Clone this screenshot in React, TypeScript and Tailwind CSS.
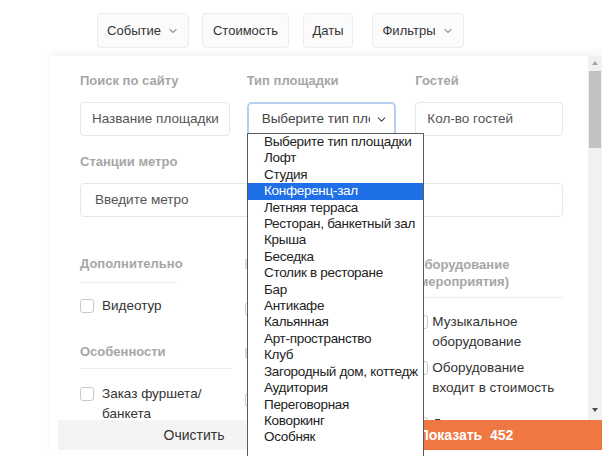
import { ChevronDown } from "lucide-react";

const venueTypes = [
  "Выберите тип площадки",
  "Лофт",
  "Студия",
  "Конференц-зал",
  "Летняя терраса",
  "Ресторан, банкетный зал",
  "Крыша",
  "Беседка",
  "Столик в ресторане",
  "Бар",
  "Антикафе",
  "Кальянная",
  "Арт-пространство",
  "Клуб",
  "Загородный дом, коттедж",
  "Аудитория",
  "Переговорная",
  "Коворкинг",
  "Особняк",
];

function Box() {
  return <span className="mt-[3px] h-[14px] w-[14px] shrink-0 rounded-[3px] border border-[#c8c8c8] bg-white" />;
}

function Check({ label, gap = "gap-[8px]" }: { label: React.ReactNode; gap?: string }) {
  return (
    <div className={`flex items-start ${gap}`}>
      <Box />
      <span className="text-[13.5px] leading-[20px] text-[#333]">{label}</span>
    </div>
  );
}

export default function App() {
  return (
    <div
      className="relative h-[456px] w-[602px] overflow-hidden bg-white"
      style={{ fontFamily: '"Liberation Sans", Arial, sans-serif' }}
    >
      {/* top filter buttons */}
      <div className="flex h-[56px] items-start pt-[13px] pl-[97px]">
        <button className="flex h-[35px] w-[92px] items-center justify-center gap-[6px] rounded-[4px] border border-[#ececec] bg-[#fbfbfb] text-[13px] text-[#333]">
          Событие <ChevronDown size={12} strokeWidth={1.8} />
        </button>
        <button className="ml-[13px] flex h-[35px] w-[87px] items-center justify-center rounded-[4px] border border-[#ececec] bg-[#fbfbfb] text-[13px] text-[#333]">
          Стоимость
        </button>
        <button className="ml-[14px] flex h-[35px] w-[50px] items-center justify-center rounded-[4px] border border-[#ececec] bg-[#fbfbfb] text-[13px] text-[#333]">
          Даты
        </button>
        <button className="ml-[19px] flex h-[35px] w-[92px] items-center justify-center gap-[6px] rounded-[4px] border border-[#ececec] bg-[#fbfbfb] text-[13px] text-[#333]">
          Фильтры <ChevronDown size={12} strokeWidth={1.8} />
        </button>
      </div>

      {/* filter panel */}
      <div className="ml-[50px] flex h-[400px] flex-col bg-white shadow-[0_-4px_6px_rgba(0,0,0,0.04)]">
        <div className="flex h-[364px] overflow-hidden">
          <div className="flex-1 pl-[30px] pt-[17px]">
            <div className="grid w-[483px] grid-cols-3 gap-x-[17px]">
              <div className="text-[13px] font-bold leading-[16px] text-[#a6a6a6]">Поиск по сайту</div>
              <div className="text-[13px] font-bold leading-[16px] text-[#a6a6a6]">Тип площадки</div>
              <div className="pl-[2px] text-[13px] font-bold leading-[16px] text-[#a6a6a6]">Гостей</div>
              <div className="mt-[13px] flex h-[34px] items-center whitespace-nowrap rounded-[4px] border border-[#e6e6e6] px-[11px] text-[13.5px] text-[#555]">
                Название площадки
              </div>
              <div className="mt-[13px] flex h-[34px] items-center justify-between rounded-[5px] border-2 border-[#b5d0ee] pl-[13px] pr-[6px] text-[13.5px] text-[#444]">
                <span className="w-[108px] overflow-hidden whitespace-nowrap">Выберите тип площадки</span>
                <ChevronDown size={13} strokeWidth={2} className="text-[#444]" />
              </div>
              <div className="ml-[2px] mt-[13px] flex h-[34px] items-center rounded-[4px] border border-[#e6e6e6] px-[11px] text-[13.5px] text-[#555]">
                Кол-во гостей
              </div>
            </div>
            <div className="mt-[18px] text-[13px] font-bold leading-[16px] text-[#a6a6a6]">Станции метро</div>
            <div className="mt-[13px] flex h-[34px] w-[483px] items-center rounded-[4px] border border-[#e6e6e6] px-[14px] text-[13.5px] text-[#555]">
              Введите метро
            </div>

            <div className="mt-[39px] grid w-[483px] grid-cols-3 gap-x-[17px]">
              <div>
                <div className="text-[13px] font-bold leading-[16px] text-[#a6a6a6]">Дополнительно</div>
                <div className="mt-[10px] h-px w-[98px] bg-[#eeeeee]" />
                <div className="mt-[13px]">
                  <Check label="Видеотур" />
                </div>
                <div className="mt-[28px] text-[13px] font-bold leading-[16px] text-[#a6a6a6]">Особенности</div>
                <div className="mt-[8px] h-px w-[152px] bg-[#eeeeee]" />
                <div className="mt-[15px]">
                  <Check
                    label={
                      <>
                        Заказ фуршета/
                        <br />
                        банкета
                      </>
                    }
                  />
                </div>
              </div>
              <div className="-ml-[2px]">
                <div className="mt-[3px] h-[10px] w-[4px] bg-[#d8d8d8]" />
                <div className="mt-[30px] flex"><Box /></div>
                <div className="mt-[32px] h-[10px] w-[4px] bg-[#d8d8d8]" />
                <div className="mt-[32px] flex"><Box /></div>
              </div>
              <div className="ml-[1px]">
                <div className="text-[13px] font-bold leading-[17px] text-[#a6a6a6]">
                  Оборудование
                  <br />
                  (мероприятия)
                </div>
                <div className="mt-[7px] h-px w-[150px] bg-[#eeeeee]" />
                <div className="mt-[14px]">
                  <Check gap="gap-[4px]" label={<>Музыкальное<br />оборудование</>} />
                </div>
                <div className="mt-[6px]">
                  <Check gap="gap-[4px]" label={<>Оборудование<br />входит в стоимость</>} />
                </div>
                <div className="mt-[16px]">
                  <Check gap="gap-[4px]" label="Дым машина" />
                </div>
              </div>
            </div>
          </div>

          {/* scrollbar */}
          <div className="flex w-[14px] flex-col items-center bg-[#f1f1f1]">
            <div className="mt-[5px] h-0 w-0 border-x-[3.5px] border-b-[4px] border-x-transparent border-b-[#a3a3a3]" />
            <div className="mt-[6px] h-[77px] w-[12px] bg-[#c1c1c1]" />
            <div className="flex-1" />
            <div className="mb-[8px] h-0 w-0 border-x-[3.5px] border-t-[4px] border-x-transparent border-t-[#505050]" />
          </div>
        </div>

        {/* footer */}
        <div className="ml-[8px] flex h-[30px]">
          <div className="flex w-[272px] items-center justify-center bg-[#f4f4f4] text-[14px] text-[#333]">
            Очистить
          </div>
          <div className="flex flex-1 items-center justify-center bg-[#ef7744] text-[14px] font-bold text-white">
            Показать&nbsp; 452
          </div>
        </div>
      </div>

      {/* open select list */}
      <ul className="absolute left-[247px] top-[133px] h-[330px] w-[177px] border border-[#5a5a5a] bg-white text-[13.5px] leading-[16.4px] tracking-[-0.3px] text-[#222]">
        {venueTypes.map((t) => (
          <li
            key={t}
            className={
              t === "Конференц-зал"
                ? "whitespace-nowrap bg-[#1f6fe6] pl-[16px] text-white"
                : "overflow-hidden whitespace-nowrap pl-[16px]"
            }
          >
            {t}
          </li>
        ))}
      </ul>
    </div>
  );
}
